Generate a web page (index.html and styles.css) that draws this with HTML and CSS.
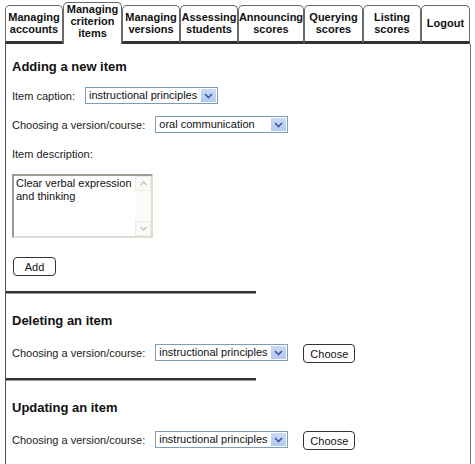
FILE: index.html
```html
<!DOCTYPE html>
<html lang="en">
<head>
<meta charset="utf-8">
<title>Managing criterion items</title>
<link rel="stylesheet" href="styles.css">
</head>
<body>
<div class="page">
  <nav class="tabs">
    <a class="tab w58">Managing<br>accounts</a>
    <a class="tab w59 active">Managing<br>criterion<br>items</a>
    <a class="tab w58">Managing<br>versions</a>
    <a class="tab w58">Assessing<br>students</a>
    <a class="tab w66">Announcing<br>scores</a>
    <a class="tab w59">Querying<br>scores</a>
    <a class="tab w58">Listing<br>scores</a>
    <a class="tab w49">Logout</a>
  </nav>

  <main class="panel">
    <section class="block first">
      <h2 class="title">Adding a new item</h2>
      <div class="row">
        <span class="label">Item caption:</span>
        <span class="select"><span class="value">instructional principles</span><span class="arrow"><svg width="9" height="6" viewBox="0 0 9 6"><path d="M1 1 L4.5 4.5 L8 1" fill="none" stroke="#3a5a9a" stroke-width="1.6"/></svg></span></span>
      </div>
      <div class="row">
        <span class="label">Choosing a version/course:</span>
        <span class="select"><span class="value">oral communication</span><span class="arrow"><svg width="9" height="6" viewBox="0 0 9 6"><path d="M1 1 L4.5 4.5 L8 1" fill="none" stroke="#3a5a9a" stroke-width="1.6"/></svg></span></span>
      </div>
      <div class="row">
        <span class="label">Item description:</span>
      </div>
      <div class="textarea">
        <div class="text">Clear verbal expression and thinking</div>
        <div class="scroll">
          <span class="sbtn"><svg width="7" height="5" viewBox="0 0 7 5"><path d="M0.5 4 L3.5 1 L6.5 4" fill="none" stroke="#c4c4c4" stroke-width="1.4"/></svg></span>
          <span class="sbtn"><svg width="7" height="5" viewBox="0 0 7 5"><path d="M0.5 1 L3.5 4 L6.5 1" fill="none" stroke="#c4c4c4" stroke-width="1.4"/></svg></span>
        </div>
      </div>
      <button class="btn add">Add</button>
    </section>

    <div class="rule"></div>

    <section class="block">
      <h2 class="title">Deleting an item</h2>
      <div class="row">
        <span class="label">Choosing a version/course:</span>
        <span class="select"><span class="value">instructional principles</span><span class="arrow"><svg width="9" height="6" viewBox="0 0 9 6"><path d="M1 1 L4.5 4.5 L8 1" fill="none" stroke="#3a5a9a" stroke-width="1.6"/></svg></span></span>
        <button class="btn choose">Choose</button>
      </div>
    </section>

    <div class="rule"></div>

    <section class="block">
      <h2 class="title">Updating an item</h2>
      <div class="row">
        <span class="label">Choosing a version/course:</span>
        <span class="select"><span class="value">instructional principles</span><span class="arrow"><svg width="9" height="6" viewBox="0 0 9 6"><path d="M1 1 L4.5 4.5 L8 1" fill="none" stroke="#3a5a9a" stroke-width="1.6"/></svg></span></span>
        <button class="btn choose">Choose</button>
      </div>
    </section>
  </main>
</div>
</body>
</html>
```

FILE: styles.css
```css
html, body {
  margin: 0;
  padding: 0;
  background: #fff;
  height: 100%;
}

body {
  font-family: "Liberation Sans", Arial, sans-serif;
  font-size: 11px;
  color: #111;
}

.page {
  width: 466px;
  margin-left: 5px;
  height: 100%;
  display: flex;
  flex-direction: column;
}

/* tab strip */
.tabs {
  display: flex;
  align-items: flex-end;
  height: 44px;
  flex: none;
}

.tab {
  box-sizing: border-box;
  height: 39px;
  border: 1px solid #6a6a6a;
  border-bottom: 3px solid #333;
  border-radius: 5px 5px 0 0;
  display: flex;
  align-items: center;
  justify-content: center;
  text-align: center;
  font-weight: bold;
  font-size: 11px;
  line-height: 12px;
  color: #111;
  padding-bottom: 1px;
}

.tab.active {
  height: 42px;
  border-bottom: none;
  padding-bottom: 6px;
  line-height: 12px;
}

.w58 { width: 58px; }
.w59 { width: 59px; }
.w66 { width: 66px; }
.w49 { width: 49px; }

/* content frame */
.panel {
  flex: 1;
  border-left: 1px solid #555;
  border-right: 1px solid #777;
}

.block {
  padding: 18px 0 17px 6px;
}

.block.first {
  padding-top: 14px;
  padding-bottom: 15px;
}

.title {
  margin: 0;
  font-size: 13px;
  font-weight: bold;
  line-height: 17px;
  color: #111;
}

.row {
  display: flex;
  align-items: center;
  height: 17px;
  margin-top: 15px;
}

.first .row {
  margin-top: 12px;
}

.label {
  margin-right: 10px;
  color: #222;
}

/* drop-down look-alike */
.select {
  box-sizing: border-box;
  width: 133px;
  height: 17px;
  border: 1px solid #7f9db9;
  display: flex;
  align-items: stretch;
  background: #fff;
}

.select .value {
  flex: 1;
  padding-left: 3px;
  line-height: 15px;
  white-space: nowrap;
  overflow: hidden;
}

.select .arrow {
  width: 15px;
  margin: 1px;
  background: linear-gradient(#cbdaf8, #b3c8f2);
  display: flex;
  align-items: center;
  justify-content: center;
}

/* multi-line text box with a disabled scrollbar */
.textarea {
  box-sizing: border-box;
  width: 141px;
  height: 64px;
  margin-top: 12px;
  border: 2px solid #9a9a90;
  border-right-color: #e0ded4;
  border-bottom-color: #e0ded4;
  display: flex;
}

.textarea .text {
  flex: 1;
  padding: 1px 2px;
  line-height: 13px;
}

.scroll {
  width: 16px;
  background: #fbfbf8;
  display: flex;
  flex-direction: column;
  justify-content: space-between;
}

.sbtn {
  height: 15px;
  border: 1px solid #ecebe4;
  box-sizing: border-box;
  display: flex;
  align-items: center;
  justify-content: center;
  background: #fafaf6;
}

.btn {
  box-sizing: border-box;
  font-family: "Liberation Sans", Arial, sans-serif;
  font-size: 11px;
  color: #111;
  background: #fff;
  border: 1px solid #333;
  border-radius: 4px;
  height: 19px;
  padding: 0;
}

.add {
  width: 43px;
  margin-top: 19px;
  display: block;
  margin-left: 1px;
}

.choose {
  width: 52px;
  margin-left: 15px;
  margin-top: 2px;
  flex: none;
}

.rule {
  width: 250px;
  height: 2px;
  background: #333;
  border-bottom: 1px solid #999;
}
```
